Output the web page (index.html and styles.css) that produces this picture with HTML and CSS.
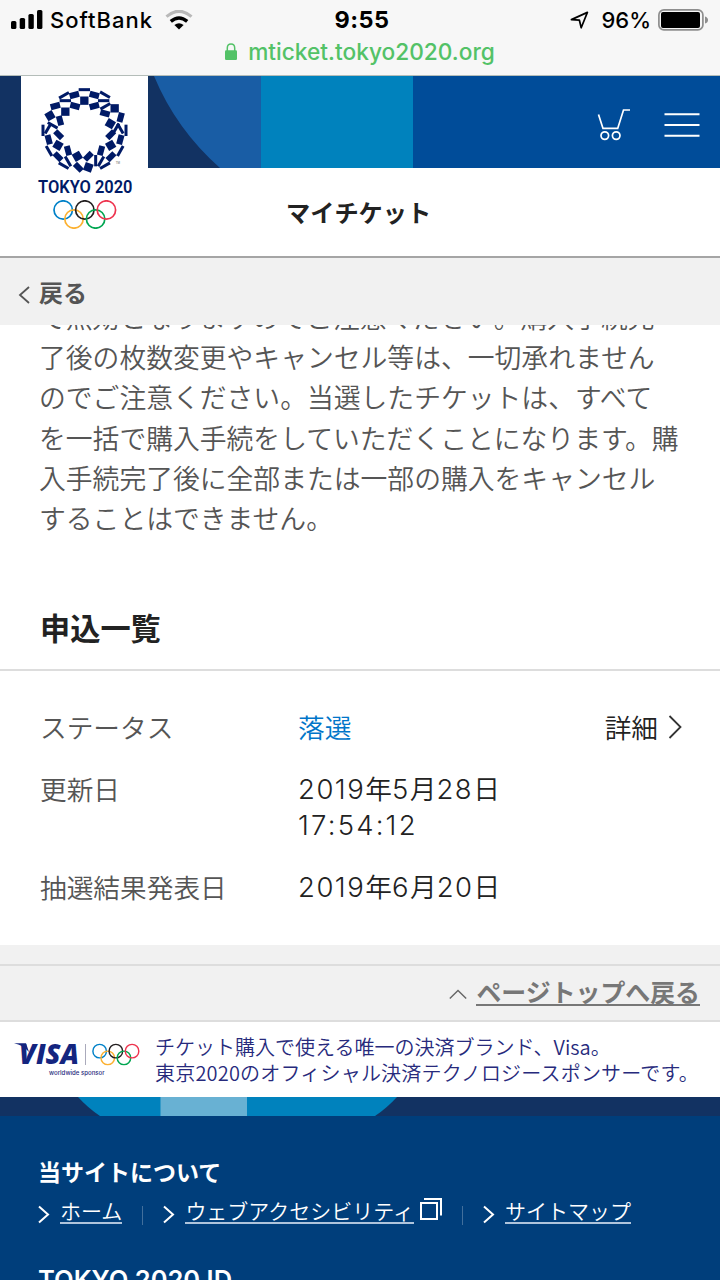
FILE: index.html
```html
<!DOCTYPE html>
<html lang="ja">
<head>
  <meta charset="UTF-8">
  <title>マイチケット</title>
  <link rel="stylesheet" href="styles.css">
</head>
<body>
  <div class="browser-bar">
    <div class="status-row">
      <div class="status-left">
        <svg class="signal" width="32" height="20" viewBox="0 0 32 20">
          <rect x="0" y="11" width="5.4" height="8" rx="1.6"/>
          <rect x="8.7" y="8" width="5.4" height="11" rx="1.6"/>
          <rect x="17.4" y="4" width="5.4" height="15" rx="1.6"/>
          <rect x="26" y="0" width="5.4" height="19" rx="1.6"/>
        </svg>
        <span class="carrier">SoftBank</span>
        <svg class="wifi" width="28" height="20" viewBox="0 0 28 20">
          <path d="M1.5 6.6Q14-4 26.5 6.6" fill="none" stroke="#b9b9b9" stroke-width="3.2"/>
          <path d="M5.8 11.4Q14 4.4 22.2 11.4" fill="none" stroke="#000" stroke-width="3.4"/>
          <path d="M9.4 15Q14 11.4 18.6 15L14 19.4Z"/>
        </svg>
      </div>
      <div class="clock">9:55</div>
      <div class="status-right">
        <svg class="location" width="19" height="19" viewBox="0 0 19 19">
          <path d="M17.4 1.4L11.2 16.8L9.4 9.2L1.4 8.6Z" fill="none" stroke="#000" stroke-width="1.7" stroke-linejoin="round"/>
        </svg>
        <span class="percent">96%</span>
        <svg class="battery" width="51" height="22" viewBox="0 0 51 22">
          <rect x="0.9" y="0.9" width="44" height="20" rx="5" fill="none" stroke="#8e8e8e" stroke-width="1.7"/>
          <rect x="3" y="3" width="39" height="16" rx="2"/>
          <path d="M47 7.5Q50 8.5 50 11T47 14.5Z" fill="#8e8e8e"/>
        </svg>
      </div>
    </div>
    <div class="url-row">
      <svg width="12" height="17" viewBox="0 0 12 17">
        <path d="M2.3 8V5Q2.3 1 6 1T9.7 5V8" fill="none" stroke="#53c267" stroke-width="1.5"/>
        <rect x="0" y="7.2" width="12" height="9.8" rx="1.2" fill="#53c267"/>
      </svg>
      <span class="url">mticket.tokyo2020.org</span>
    </div>
  </div>

  <header class="site-header">
    <svg class="header-pattern" width="720" height="92" viewBox="0 0 720 92">
      <rect width="720" height="92" fill="#004c99"/>
      <rect width="262" height="92" fill="#195da5"/>
      <path d="M0 0H154Q176 53 220 92H0Z" fill="#123262"/>
      <rect x="261" width="152" height="92" fill="#0082bd"/>
    </svg>
    <div class="header-icons">
      <svg width="34" height="34" viewBox="0 0 34 34" fill="none" stroke="#fff" stroke-width="1.7">
        <path d="M1.5 6.5L6 20.4H20.7L26.5 2H33"/>
        <circle cx="7.8" cy="27.6" r="3.8"/>
        <circle cx="19.2" cy="27.6" r="3.8"/>
      </svg>
      <svg width="36" height="24" viewBox="0 0 36 24" stroke="#fff" stroke-width="2">
        <path d="M0.5 1.2H35.5M0.5 12H35.5M0.5 22.8H35.5"/>
      </svg>
    </div>
    <div class="logo">
      <svg width="127" height="99" viewBox="63 228 381 297" fill="#001a66">
        <defs>
          <rect id="a" x="-12.5" y="-12.5" width="25" height="25"/>
          <rect id="b" x="-14.5" y="-9" width="29" height="18"/>
          <rect id="c" x="-17" y="-4.5" width="34" height="9"/>
        </defs>
        <use href="#c" transform="translate(253 269)"/>
        <use href="#a" transform="translate(253 302)"/>
        <use href="#c" transform="translate(192 286) rotate(-30)"/>
        <use href="#b" transform="translate(223 285) rotate(-15)"/>
        <use href="#b" transform="translate(283 285) rotate(15)"/>
        <use href="#c" transform="translate(315 284) rotate(30)"/>
        <use href="#c" transform="translate(196 302)"/>
        <use href="#c" transform="translate(311 302)"/>
        <use href="#b" transform="translate(166 318) rotate(-15)"/>
        <use href="#b" transform="translate(225 318) rotate(15)"/>
        <use href="#b" transform="translate(283 318) rotate(-15)"/>
        <use href="#c" transform="translate(316 319) rotate(-30)"/>
        <use href="#a" transform="translate(344 325)"/>
        <use href="#a" transform="translate(196 335)"/>
        <use href="#a" transform="translate(150 347) rotate(-30)"/>
        <use href="#b" transform="translate(315 340) rotate(15)"/>
        <use href="#b" transform="translate(362 352) rotate(105)"/>
        <use href="#b" transform="translate(180 362) rotate(75)"/>
        <use href="#a" transform="translate(331 371) rotate(30)"/>
        <use href="#c" transform="translate(158 376) rotate(30)"/>
        <use href="#c" transform="translate(144 386) rotate(-60)"/>
        <use href="#c" transform="translate(129 391) rotate(90)"/>
        <use href="#c" transform="translate(378 391) rotate(90)"/>
        <use href="#c" transform="translate(361 386) rotate(60)"/>
        <use href="#c" transform="translate(348 385) rotate(-60)"/>
        <use href="#b" transform="translate(176 404) rotate(45)"/>
        <use href="#b" transform="translate(332 404) rotate(-45)"/>
        <use href="#b" transform="translate(146 419) rotate(75)"/>
        <use href="#b" transform="translate(361 419) rotate(105)"/>
        <use href="#a" transform="translate(174 436) rotate(30)"/>
        <use href="#a" transform="translate(332 436) rotate(-30)"/>
        <use href="#c" transform="translate(147 453) rotate(60)"/>
        <use href="#c" transform="translate(361 453) rotate(-60)"/>
        <use href="#b" transform="translate(204 452) rotate(75)"/>
        <use href="#b" transform="translate(303 452) rotate(105)"/>
        <use href="#a" transform="translate(232 469) rotate(-30)"/>
        <use href="#b" transform="translate(265 469) rotate(-45)"/>
        <use href="#b" transform="translate(174 470) rotate(45)"/>
        <use href="#b" transform="translate(333 470) rotate(-45)"/>
        <use href="#c" transform="translate(287 482) rotate(90)"/>
        <use href="#c" transform="translate(204 484) rotate(60)"/>
        <use href="#c" transform="translate(303 484) rotate(-60)"/>
        <use href="#c" transform="translate(191 497) rotate(30)"/>
        <use href="#c" transform="translate(315 497) rotate(-30)"/>
        <use href="#b" transform="translate(235 502) rotate(45)"/>
        <use href="#a" transform="translate(265 502) rotate(20)"/>
        <text x="347" y="493" class="tm">TM</text>
      </svg>
      <svg width="127" height="24" viewBox="0 0 127 24">
        <text x="17" y="18" class="logo-name" textLength="94.5" lengthAdjust="spacingAndGlyphs">TOKYO 2020</text>
      </svg>
      <svg class="rings" width="64" height="29" viewBox="0 0 64 29" fill="none" stroke-width="1.7">
        <circle cx="10.2" cy="10" r="9.2" stroke="#0081c8"/>
        <circle cx="21" cy="19" r="9.2" stroke="#fcb131"/>
        <circle cx="31.8" cy="10" r="9.2" stroke="#231f20"/>
        <circle cx="42.6" cy="19" r="9.2" stroke="#00a651"/>
        <circle cx="53.4" cy="10" r="9.2" stroke="#ee334e"/>
      </svg>
    </div>
  </header>
  <div class="page-title">マイチケット</div>

  <div class="back-bar">
    <svg width="12" height="20" viewBox="0 0 12 20"><path d="M11 2L2 10L11 18" fill="none" stroke="#555" stroke-width="1.8"/></svg>
    <span>戻る</span>
  </div>

  <main>
    <div class="notice">
      <p>て無効となりますのでご注意ください。購入手続完<br>了後の枚数変更やキャンセル等は、一切承れません<br>のでご注意ください。当選したチケットは、すべて<br>を一括で購入手続をしていただくことになります。購<br>入手続完了後に全部または一部の購入をキャンセル<br>することはできません。</p>
    </div>
    <h2>申込一覧</h2>
    <div class="entry">
      <div class="label">ステータス</div>
      <div class="value lost">落選</div>
      <div class="detail">詳細<svg width="14" height="26" viewBox="0 0 14 26"><path d="M1.5 2L12.5 13L1.5 24" fill="none" stroke="#333" stroke-width="1.8"/></svg></div>
      <div class="label">更新日</div>
      <div class="value"><span class="num">2019</span>年<span class="num">5</span>月<span class="num">28</span>日<br><span class="num time">17:54:12</span></div>
      <div class="label">抽選結果発表日</div>
      <div class="value"><span class="num">2019</span>年<span class="num">6</span>月<span class="num">20</span>日</div>
    </div>
  </main>

  <div class="page-top">
    <svg width="18" height="11" viewBox="0 0 18 11"><path d="M0.8 9.6L9 1.4L17.2 9.6" fill="none" stroke="#666" stroke-width="1.4"/></svg>
    <a>ページトップへ戻る</a>
  </div>

  <div class="sponsor">
    <div class="visa">
      <div class="visa-row">
        <svg width="66" height="24" viewBox="0 0 66 24">
          <path d="M0 1.2H12L15 10Q9 3 0 1.2Z" fill="#14257f"/>
          <text x="5" y="22" class="visa-name" textLength="60" lengthAdjust="spacingAndGlyphs">VISA</text>
        </svg>
        <span class="visa-line"></span>
        <svg width="48" height="23" viewBox="0 0 64 29" fill="none" stroke-width="1.9">
          <circle cx="10.2" cy="10" r="9" stroke="#0081c8"/>
          <circle cx="21" cy="19" r="9" stroke="#fcb131"/>
          <circle cx="31.8" cy="10" r="9" stroke="#231f20"/>
          <circle cx="42.6" cy="19" r="9" stroke="#00a651"/>
          <circle cx="53.4" cy="10" r="9" stroke="#ee334e"/>
        </svg>
      </div>
      <div class="visa-sub">worldwide sponsor</div>
    </div>
    <div class="sponsor-text">
      <div class="line1">チケット購入で使える唯一の決済ブランド、Visa。</div>
      <div class="line2">東京2020のオフィシャル決済テクノロジースポンサーです。</div>
    </div>
  </div>

  <footer>
    <svg class="footer-pattern" width="720" height="19" viewBox="0 0 720 19">
      <rect width="720" height="19" fill="#123262"/>
      <path d="M78 0H397Q387 11 375 19H100Q88 11 78 0Z" fill="#0082bd"/>
      <rect x="160.5" width="86.5" height="19" fill="#68b1d3"/>
    </svg>
    <div class="footer-body">
      <h3>当サイトについて</h3>
      <div class="footer-links">
        <svg class="arrow" width="12" height="19" viewBox="0 0 12 19"><path d="M1 1.5L10 9.5L1 17.5"/></svg>
        <a>ホーム</a>
        <span class="divider"></span>
        <svg class="arrow" width="12" height="19" viewBox="0 0 12 19"><path d="M1 1.5L10 9.5L1 17.5"/></svg>
        <a>ウェブアクセシビリティ</a>
        <svg class="new-window" width="22" height="22" viewBox="0 0 22 22"><path d="M1 5H17V21H1ZM4 1H21V17.5"/></svg>
        <span class="divider"></span>
        <svg class="arrow" width="12" height="19" viewBox="0 0 12 19"><path d="M1 1.5L10 9.5L1 17.5"/></svg>
        <a>サイトマップ</a>
      </div>
      <h3 class="id-heading">TOKYO 2020 ID</h3>
    </div>
  </footer>
</body>
</html>
```
FILE: styles.css
```css
* {
  box-sizing: border-box;
}
body {
  width: 720px;
  height: 1280px;
  margin: 0;
  overflow: hidden;
  background: #fff;
  color: #222;
  font-family: "Noto Sans CJK JP", sans-serif;
}
svg {
  display: block;
  flex: none;
}
a {
  white-space: nowrap;
}
.browser-bar {
  height: 76px;
  background: #f7f7f7;
  border-bottom: 1px solid #b4bdb9;
  font-family: Inter, sans-serif;
  color: #000;
}
.status-row {
  height: 40px;
  display: grid;
  grid-template-columns: 1fr auto 1fr;
  align-items: center;
  padding: 0 11px 0 11px;
}
.status-left, .status-right {
  display: flex;
  align-items: center;
  font-size: 22px;
  font-weight: 500;
}
.status-right {
  justify-content: flex-end;
}
.carrier {
  margin: 0 12px 0 7px;
  letter-spacing: 1px;
}
.clock {
  font-size: 23.5px;
  font-weight: 700;
  line-height: 26px;
  letter-spacing: 0.4px;
  margin-left: 4px;
}
.percent {
  margin: 0 7px 0 12px;
}
.url-row {
  display: flex;
  justify-content: center;
  align-items: center;
  height: 23px;
  color: #53c267;
}
.url {
  margin-left: 11px;
  font-size: 22.7px;
  font-weight: 500;
  line-height: 23px;
}
.site-header {
  position: relative;
  height: 92px;
}
.header-icons {
  position: absolute;
  top: 32px;
  right: 20px;
  display: flex;
  align-items: center;
  gap: 33px;
}
.logo {
  position: absolute;
  top: 0;
  left: 21px;
  width: 127px;
  height: 160px;
  background: #fff;
}
.tm {
  font: 9px "Liberation Sans", sans-serif;
  fill: #666;
}
.logo-name {
  font: 600 18.5px Roboto, sans-serif;
  fill: #001a66;
}
.rings {
  margin: 1px 0 0 32px;
}
.page-title {
  height: 90px;
  padding-left: 286px;
  border-bottom: 2px solid #a5a5a5;
  font-size: 24.2px;
  font-weight: 700;
  line-height: 87px;
}
.back-bar {
  height: 67px;
  padding: 0 0 0 18px;
  display: flex;
  align-items: center;
  gap: 9px;
  background: #f1f1f1;
  color: #555;
  font-size: 24px;
  font-weight: 700;
}
.back-bar svg {
  margin-top: 6px;
}
.notice {
  height: 275px;
  overflow: hidden;
}
.notice p {
  margin: -28px 0 0 39px;
  color: #555;
  font-size: 26.8px;
  font-weight: 350;
  line-height: 40.2px;
  white-space: nowrap;
}
h2 {
  height: 71px;
  margin: 0;
  padding: 0 40px;
  border-bottom: 2px solid #ddd;
  font-size: 30.2px;
  font-weight: 700;
  line-height: 54px;
}
.entry {
  height: 274px;
  padding: 38px 38px 0 40px;
  display: grid;
  grid-template-columns: 258px 1fr auto;
  grid-template-rows: 36px 72px 36px;
  row-gap: 26px;
  font-size: 26.7px;
  font-weight: 350;
  line-height: 36px;
}
.label {
  color: #555;
  grid-column: 1;
}
.value {
  margin-top: -1px;
}
.num {
  font-family: Inter, sans-serif;
  font-size: 27.5px;
  font-weight: 300;
  line-height: 1;
  letter-spacing: 1.5px;
}
.time {
  letter-spacing: 2.2px;
}
.lost {
  margin-top: 0;
  color: #0075c9;
}
.detail {
  display: flex;
  align-items: center;
  gap: 10px;
}
.page-top {
  height: 77px;
  padding: 20px 20px 0 0;
  display: flex;
  justify-content: flex-end;
  align-items: center;
  gap: 9px;
  background: linear-gradient(#ddd, #ddd) 0 19px / 100% 2px no-repeat #f1f1f1;
  border-bottom: 2px solid #ddd;
}
.page-top svg {
  margin-top: 4px;
}
.page-top a {
  border-bottom: 2px solid #777;
  color: #777;
  font-size: 24.9px;
  font-weight: 700;
  line-height: 25px;
}
.sponsor {
  height: 75px;
  display: flex;
  background: #fff;
  color: #272a7c;
}
.visa {
  width: 155px;
  padding: 20px 0 0 14px;
}
.visa-row {
  display: flex;
  height: 24px;
  align-items: center;
}
.visa-name {
  font: italic 800 29px "Open Sans", sans-serif;
  fill: #14257f;
}
.visa-line {
  width: 1px;
  height: 21px;
  margin: 0 6px 0 5px;
  background: #aab;
}
.visa-sub {
  margin: 2px 0 0 35px;
  font: 500 6.1px/10px Inter, sans-serif;
  white-space: nowrap;
}
.sponsor-text {
  padding-top: 12px;
  font-size: 20px;
  font-weight: 350;
  line-height: 26px;
  white-space: nowrap;
}
.line2 {
  letter-spacing: 0.2px;
}
.footer-body {
  height: 164px;
  padding: 35px 38px 0;
  background: #003e7b;
  color: #fff;
}
footer h3 {
  margin: 0;
  font-size: 23px;
  font-weight: 700;
  line-height: 40px;
}
.footer-links {
  height: 42px;
  display: flex;
  align-items: center;
  font-size: 21px;
  font-weight: 350;
}
.footer-links a {
  margin: -3px 0 0 10px;
  border-bottom: 2px solid #afc4dc;
  line-height: 24px;
}
.arrow {
  margin-top: 4px;
  fill: none;
  stroke: #fff;
  stroke-width: 2;
}
.new-window {
  margin: -6px 0 0 6px;
  fill: none;
  stroke: #fff;
  stroke-width: 2;
}
.divider {
  width: 1px;
  height: 19px;
  margin: 6px 20px 0;
  background: #426f9c;
}
footer .id-heading {
  margin-top: 27px;
  font-family: Inter, sans-serif;
  font-size: 25.5px;
  font-weight: 600;
}
```
